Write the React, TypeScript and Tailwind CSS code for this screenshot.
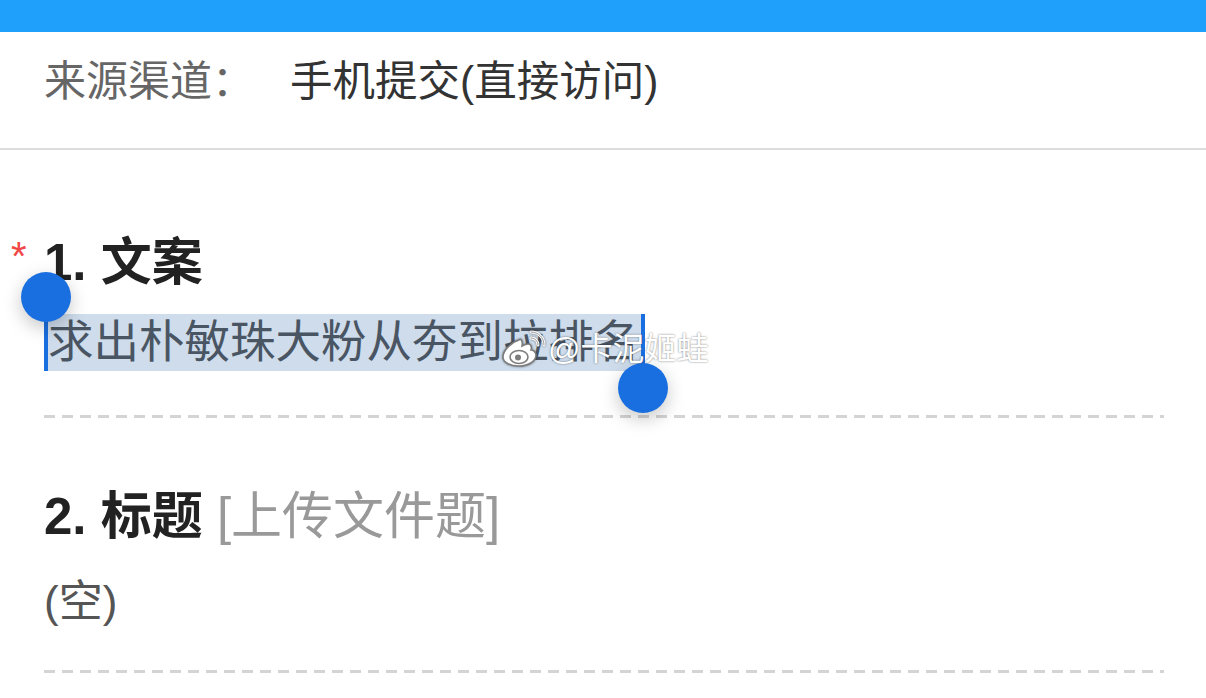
import React from 'react';

const font = { fontFamily: '"Liberation Sans", "Noto Sans CJK SC", sans-serif' };

function WeiboLogo() {
  return (
    <svg width="46" height="38" viewBox="0 0 46 38" className="drop-shadow-[0_0_1px_rgba(0,0,0,0.5)]">
      <path
        d="M19 10c-7 2-16 10-16 17 0 6 8 9 16 9 10 0 17-5 17-11 0-3-3-5-5-5 1-3 0-6-3-6-2 0-4 1-6 2 1-5-1-8-3-6z"
        fill="white"
        stroke="#7d7d7d"
        strokeWidth="1.6"
      />
      <ellipse cx="19" cy="27" rx="9" ry="6.5" fill="none" stroke="#7d7d7d" strokeWidth="1.6" />
      <circle cx="18" cy="27.5" r="3" fill="#7d7d7d" />
      <path d="M31 8c4 0 7 3 7 7" fill="none" stroke="white" strokeWidth="3" strokeLinecap="round" />
      <path d="M31 2c7.5 0 13 5.5 13 13" fill="none" stroke="white" strokeWidth="3" strokeLinecap="round" />
      <path d="M31 8c4 0 7 3 7 7M31 2c7.5 0 13 5.5 13 13" fill="none" stroke="#7d7d7d" strokeWidth="0.8" strokeLinecap="round" />
    </svg>
  );
}

function Dashed() {
  return (
    <div className="h-[3px] w-[1120px] bg-[repeating-linear-gradient(to_right,#d4d4d4_0_11px,transparent_11px_18px)]" />
  );
}

export default function App() {
  return (
    <div className="relative w-[1206px] h-[698px] overflow-hidden bg-white" style={font}>
      <div className="h-[32px] bg-[#1fa0fb]" />

      <div className="flex items-center pl-[44px] pt-[25px] pb-[41px] border-b-2 border-[#dcdcdc]">
        <div className="w-[246px] text-[42px] leading-[50px] text-[#666]">来源渠道：</div>
        <div className="text-[42.5px] leading-[50px] text-[#333]">手机提交(直接访问)</div>
      </div>

      <div className="flex flex-col items-start pl-[44px]">
        <div className="relative mt-[83px] text-[51px] leading-[60px] font-semibold text-[#222]">
          <span className="absolute left-[-33px] top-[3px] text-[40px] leading-[40px] font-normal text-[#f04646]">*</span>
          1. 文案
        </div>

        <div className="mt-[21px] flex h-[57px]">
          <span className="relative inline-block h-[57px] pl-[4px] pr-[2px] bg-[#cedcec] text-[45.5px] leading-[57px] text-[#4a5563]">
            求出朴敏珠大粉从夯到拉排名
            <span className="absolute left-0 top-[-14px] w-[4px] h-[71px] bg-[#1a6fe0]" />
            <span className="absolute left-[-23px] top-[-42px] w-[50px] h-[50px] rounded-full bg-[#1a6fe0] shadow-[0_6px_18px_rgba(0,0,0,0.22)]" />
            <span className="absolute right-[-3px] top-0 w-[4px] h-[72px] bg-[#1a6fe0]" />
            <span className="absolute right-[-26px] top-[49px] w-[50px] h-[50px] rounded-full bg-[#1a6fe0] shadow-[0_6px_18px_rgba(0,0,0,0.22)]" />
          </span>
        </div>

        <div className="mt-[44px]">
          <Dashed />
        </div>

        <div className="mt-[69px] text-[51px] leading-[60px] text-[#222]">
          <span className="font-semibold">2. 标题</span> <span className="text-[#999]">[上传文件题]</span>
        </div>
        <div className="mt-[26px] text-[44px] leading-[57px] text-[#555]">(空)</div>
        <div className="mt-[40px]">
          <Dashed />
        </div>
      </div>

      <div className="absolute left-[500px] top-[330px] flex items-center gap-[2px]">
        <WeiboLogo />
        <span className="text-[32px] leading-[38px] text-white [text-shadow:0_0_2px_rgba(0,0,0,0.55)]">@卡泥姬蛙</span>
      </div>
    </div>
  );
}
